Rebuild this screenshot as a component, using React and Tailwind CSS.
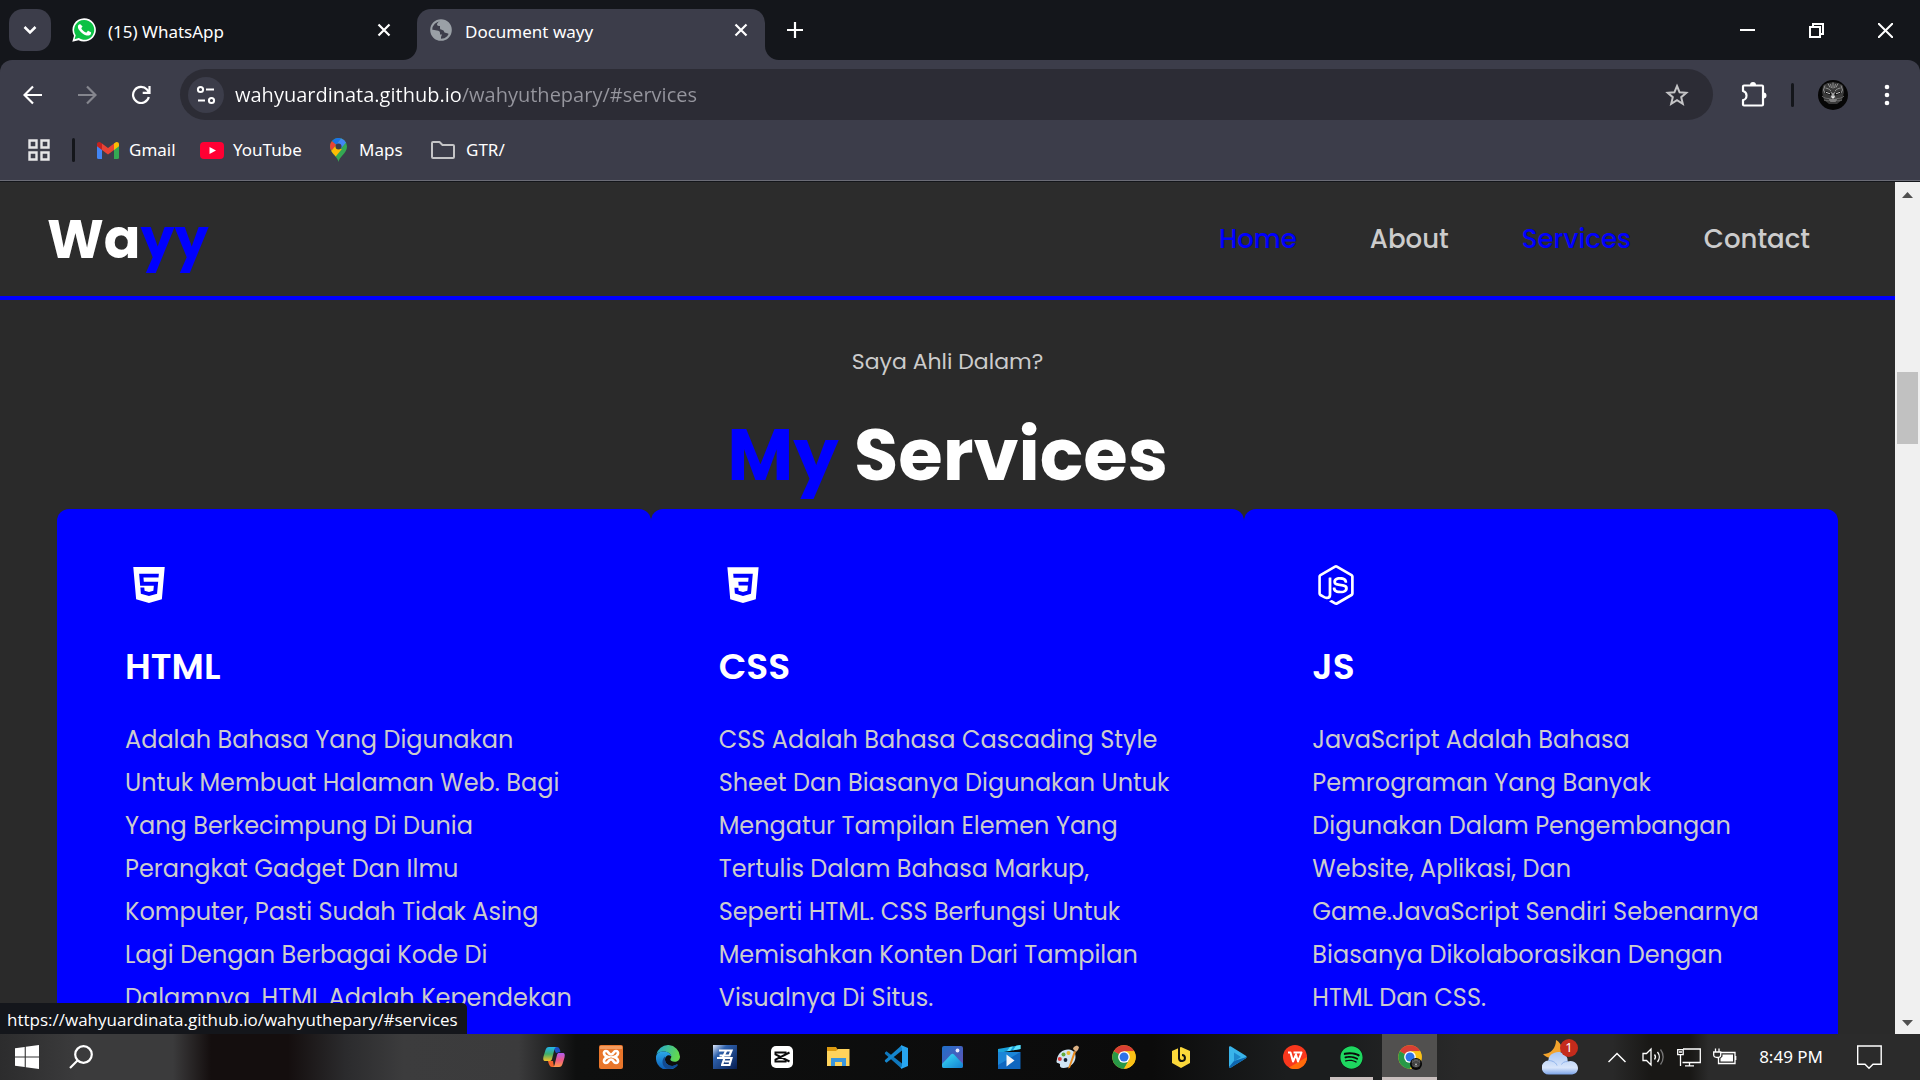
import React from "react";
import { BiLogoHtml5, BiLogoCss3, BiLogoNodejs } from "react-icons/bi";
import { FaSpotify } from "react-icons/fa";

function WhatsAppIcon() {
  return (
    <svg width="24" height="24" viewBox="0 0 24 24" aria-hidden="true">
      <path fill="#fff" d="M12.100 0.200A11.700 11.700 0 0 0 2 17.700L0.300 23.800l6.300-1.600A11.700 11.700 0 1 0 12.100 0.200z" />
      <path fill="#0bc144" d="M12.100 2A9.900 9.900 0 0 0 3.700 17.200l-1.100 4 4.200-1.100A9.900 9.900 0 1 0 12.100 2z" />
      <path fill="#fff" d="M8.800 6.800c-.3-.6-.6-.6-1-.6-.9 0-1.900 1-1.900 2.600 0 1.600 1.100 3.100 1.300 3.300.2.300 2.300 3.600 5.700 4.800 2.800 1 3.300.6 3.900.5.800-.1 1.900-.8 2.100-1.700.3-.8.300-1.400.1-1.500l-2.500-1.300c-.4-.1-.6-.1-.8.2l-1.100 1.300c-.2.200-.4.200-.7.100-.4-.2-1.500-.6-2.700-1.700-1-.9-1.700-2-1.800-2.300-.2-.4 0-.5.200-.7l.8-1c.1-.2.1-.4 0-.6z" />
    </svg>
  );
}

function GlobeIcon() {
  return (
    <svg width="24" height="24" viewBox="0 0 24 24" aria-hidden="true">
      <circle cx="12" cy="12" r="9.800" fill="#3c3d4a" stroke="#9aa0a6" strokeWidth="2" />
      <path fill="#9aa0a6" d="M2.500 11.500 8 12.500c2 .3 3 1 3 2.500v1.500h2l-1 2.500v3c-5 .5-9.500-4-9.500-10.500zM12 2c-2 2-4 2.500-4 4.500 0 1.500 1.500 1.500 3 1.500v2c0 2 2 1.500 3.500 2.500l1 2 3.500 1 2 1.500c3-6-1-14-9-15z" />
    </svg>
  );
}

function ChevronDown() {
  return (
    <svg width="20" height="20" viewBox="0 0 20 20" fill="none" stroke="#fff" strokeWidth="2.500" aria-hidden="true">
      <path d="m4.500 7 5.500 5.500L15.500 7" />
    </svg>
  );
}

function CrossIcon() {
  return (
    <svg width="14" height="14" viewBox="0 0 14 14" fill="none" stroke="#fff" strokeWidth="2.200" aria-hidden="true">
      <path d="m1.500 1.500 11 11m0-11-11 11" />
    </svg>
  );
}

function ChromeLogo({ size = 24 }) {
  return (
    <svg width={size} height={size} viewBox="0 0 48 48" aria-hidden="true">
      <circle cx="24" cy="24" r="23.500" fill="#fbc116" />
      <path fill="#d93f33" d="M24 24 3.600 12.300a23.500 23.500 0 0 1 40.800 0H24z" />
      <path fill="#279847" d="M24 24 3.600 12.300A23.500 23.500 0 0 0 24 47.500l10.200-17.600z" />
      <path fill="#fbc116" d="M24 47.500A23.500 23.500 0 0 0 44.400 12.300H24l10.200 17.600z" />
      <circle cx="24" cy="24" r="11.700" fill="#fff" />
      <circle cx="24" cy="24" r="9" fill="#2f72e8" />
    </svg>
  );
}

function CatAvatar({ size = 30 }) {
  return (
    <svg width={size} height={size} viewBox="0 0 30 30" aria-hidden="true">
      <circle cx="15" cy="15" r="15" fill="#060606" />
      <path fill="#3a3a3a" d="M5 6c1-2 3-2 5-3 3-1 7-1 10 0 2 1 4 1 5 3l1 6-2 8-5 4h-8l-5-4-2-8z" />
      <g fill="none" stroke="#8f8f8f" strokeWidth="1">
        <path d="M7 5.500 5.500 10l1.500 3M23 5.500l1.500 4.500-1.500 3M10 3.500l2 4M20 3.500l-2 4M15 2.500v6M12.500 4l1 4M17.500 4l-1 4M7.500 8c2 .5 4 1 5.500 3M22.500 8c-2 .5-4 1-5.500 3" />
        <path stroke="#0c0c0c" strokeWidth="2" d="m7.500 12 5.500 2.500M22.500 12 17 14.500" />
        <path stroke="#c8c8c8" d="m8 12.300 4 1.500M22 12.300l-4 1.500" />
        <path d="M4 16c2 2 4 2.500 7 2.500M26 16c-2 2-4 2.500-7 2.500M6 20c2 1 4 1 6 .5M24 20c-2 1-4 1-6 .5" stroke="#6a6a6a" />
      </g>
      <path fill="#a6a6a6" d="m12.500 11.500 1.500 3-1.500 3h5l-1.500-3 1.500-3-2.500 2z" />
      <path fill="#ececec" d="M13 16.500h4L15 19z" />
      <path fill="#7d7d7d" d="M10.500 18.500c2 0 3.500.5 4.500.5s2.500-.5 4.500-.5l-2 3.500h-5z" />
    </svg>
  );
}

function IconButton({ label, className, children }) {
  return (
    <button type="button" aria-label={label} className={"flex items-center justify-center " + className}>
      {children}
    </button>
  );
}

function TabStrip() {
  return (
    <div className="flex h-[60px] shrink-0 items-start bg-[#14161b] pl-[9px] text-[17px] text-white">
      <IconButton label="Search tabs" className="mt-[9px] size-[42px] rounded-[14px] bg-[#3c3d4a]">
        <ChevronDown />
      </IconButton>
      <div className="mt-[9px] flex h-[42px] w-[366px] items-center pr-[26px] pl-[21px]">
        <WhatsAppIcon />
        <span className="ml-3 flex-1 pt-[3px]">(15) WhatsApp</span>
        <IconButton label="Close WhatsApp tab" className="size-[14px]">
          <CrossIcon />
        </IconButton>
      </div>
      <div className="relative mt-[9px] flex h-[51px] w-[348px] items-start rounded-t-[14px] bg-[#3c3d4a] pr-[17px] pl-3">
        <svg className="absolute bottom-0 -left-[14px]" width="14" height="14" aria-hidden="true">
          <path d="M14 0v14H0A14 14 0 0 0 14 0z" fill="#3c3d4a" />
        </svg>
        <svg className="absolute -right-[14px] bottom-0" width="14" height="14" aria-hidden="true">
          <path d="M0 0v14h14A14 14 0 0 1 0 0z" fill="#3c3d4a" />
        </svg>
        <div className="flex h-[42px] flex-1 items-center">
          <GlobeIcon />
          <span className="ml-3 flex-1 pt-[3px]">Document wayy</span>
          <IconButton label="Close Document wayy tab" className="size-[14px]">
            <CrossIcon />
          </IconButton>
        </div>
      </div>
      <IconButton label="New tab" className="mt-[9px] ml-[9px] size-[42px]">
        <svg width="18" height="18" viewBox="0 0 18 18" stroke="#fff" strokeWidth="2.200" aria-hidden="true">
          <path d="M9 1v16M1 9h16" />
        </svg>
      </IconButton>
      <div className="ml-auto flex h-[60px]">
        <IconButton label="Minimize" className="w-[69px]">
          <svg width="15" height="15" aria-hidden="true">
            <path d="M0 6h15v2H0z" fill="#fff" />
          </svg>
        </IconButton>
        <IconButton label="Restore" className="w-[69px]">
          <svg width="15" height="15" fill="none" stroke="#fff" strokeWidth="2" aria-hidden="true">
            <path d="M1 4h10v10H1zM4 4V1h10v10h-3" />
          </svg>
        </IconButton>
        <IconButton label="Close window" className="w-[69px]">
          <svg width="15" height="15" fill="none" stroke="#fff" strokeWidth="2" aria-hidden="true">
            <path d="m0 0 15 15M15 0 0 15" />
          </svg>
        </IconButton>
      </div>
    </div>
  );
}

function AddressRow() {
  return (
    <div className="flex h-[69px] items-center pr-[19px] pl-[6px]">
      <IconButton label="Back" className="size-[54px]">
        <svg width="20" height="20" viewBox="0 0 20 20" fill="none" stroke="#fff" strokeWidth="2.200" aria-hidden="true">
          <path d="M19 10H2.500M10 1.500 1.500 10l8.500 8.500" />
        </svg>
      </IconButton>
      <IconButton label="Forward" className="size-[54px]">
        <svg width="20" height="20" viewBox="0 0 20 20" fill="none" stroke="#85868e" strokeWidth="2.200" aria-hidden="true">
          <path d="M1 10h16.500M10 1.500l8.500 8.500-8.500 8.500" />
        </svg>
      </IconButton>
      <IconButton label="Reload" className="size-[54px]">
        <svg width="20" height="20" viewBox="0 0 20 20" fill="none" stroke="#fff" strokeWidth="2.200" aria-hidden="true">
          <path d="M17.800 12A8 8 0 1 1 16 4.600L18 7M18.500 1v6.800h-6.800" />
        </svg>
      </IconButton>
      <form className="ml-3 flex h-[51px] flex-1 items-center rounded-full bg-[#2c2c35] pr-[24px] pl-2">
        <IconButton label="View site information" className="size-9 rounded-full bg-[#3c3d4a]">
          <svg width="20" height="20" viewBox="0 0 20 20" fill="none" stroke="#fff" strokeWidth="2" aria-hidden="true">
            <circle cx="4.500" cy="4.500" r="2.600" />
            <path d="M10 4.500h8M2 15.500h7" />
            <circle cx="15.500" cy="15.500" r="2.600" />
          </svg>
        </IconButton>
        <input
          type="text"
          aria-label="Address and search bar"
          defaultValue="wahyuardinata.github.io/wahyuthepary/#services"
          className="ml-[11px] h-9 min-w-0 flex-1 bg-[linear-gradient(90deg,#ffffff_227px,#96969e_227px)] bg-clip-text font-['Segoe_UI','Open_Sans',sans-serif] text-[20px] text-transparent outline-none"
        />
        <IconButton label="Bookmark this tab" className="size-6">
          <svg width="24" height="24" viewBox="0 0 24 24" fill="none" stroke="#c4c4c6" strokeWidth="2" aria-hidden="true">
            <path d="m12 3 2.600 6.300 6.700.5-5.100 4.400 1.600 6.600L12 17.200l-5.800 3.600 1.600-6.600-5.100-4.400 6.700-.5z" />
          </svg>
        </IconButton>
      </form>
      <IconButton label="Extensions" className="ml-[27px] size-[28px]">
        <svg width="28" height="28" viewBox="0 0 28 28" aria-hidden="true">
          <path d="M4 4.500h18a1 1 0 0 1 1 1v18a1 1 0 0 1-1 1H4a1 1 0 0 1-1-1V19c2 0 3.500-2 3.500-4.500S5 10.500 3 10V5.500a1 1 0 0 1 1-1z" fill="none" stroke="#fff" strokeWidth="2.200" strokeLinejoin="round" />
          <path d="M10 4a3 3 0 0 1 6 0zM23.500 11.500a3 3 0 0 1 0 6z" fill="#fff" />
        </svg>
      </IconButton>
      <span className="ml-[23px] h-6 w-[3px] rounded-full bg-[#14161b]" />
      <IconButton label="Profile" className="ml-6 size-[30px]">
        <CatAvatar />
      </IconButton>
      <IconButton label="Chrome menu" className="ml-[25px] size-[28px]">
        <svg width="6" height="22" viewBox="0 0 6 22" fill="#fff" aria-hidden="true">
          <circle cx="3" cy="3" r="2.300" />
          <circle cx="3" cy="11" r="2.300" />
          <circle cx="3" cy="19" r="2.300" />
        </svg>
      </IconButton>
    </div>
  );
}

function BookmarkRow() {
  return (
    <nav aria-label="Bookmarks" className="flex h-[51px] items-center pb-[9px] pl-7 text-[17px] text-white">
      <IconButton label="Apps" className="size-[22px]">
        <svg width="22" height="22" fill="none" stroke="#e6e6e8" strokeWidth="2.400" aria-hidden="true">
          <path d="M1.500 1.500h7v7h-7zM13.500 1.500h7v7h-7zM1.500 13.500h7v7h-7zM13.500 13.500h7v7h-7z" />
        </svg>
      </IconButton>
      <span className="ml-[22px] h-6 w-[3px] rounded-full bg-[#14161b]" />
      <a href="#gmail" className="ml-[22px] flex w-[103px] items-center gap-[10px]">
        <svg width="22" height="17" viewBox="0 0 22 17" aria-hidden="true">
          <path fill="#4285f4" d="M0 2.500 5 6v11H1.500A1.500 1.500 0 0 1 0 15.500z" />
          <path fill="#34a853" d="M22 2.500 17 6v11h3.500a1.500 1.500 0 0 0 1.500-1.500z" />
          <path fill="#ea4335" d="M5 1.500 11 6l6-4.500V8l-6 4.500L5 8z" />
          <path fill="#c5221f" d="M0 2.300C0 .2 2.300-.7 4 .7l1 .8V8L0 4.200z" />
          <path fill="#fbbc04" d="M22 2.300c0-2.100-2.300-3-4-1.600l-1 .8V8l5-3.800z" />
        </svg>
        Gmail
      </a>
      <a href="#youtube" className="flex w-[130px] items-center gap-[9px]">
        <svg width="24" height="17" viewBox="0 0 24 17" aria-hidden="true">
          <rect width="24" height="17" rx="4" fill="#ff0033" />
          <path fill="#fff" d="m9.500 5 6.500 3.500L9.500 12z" />
        </svg>
        YouTube
      </a>
      <a href="#maps" className="flex w-[101px] items-center gap-3">
        <svg width="17" height="24" viewBox="0 0 17 24" aria-hidden="true">
          <path fill="#34a853" d="M8.500 24C7.700 18.500 0 15.500 0 8.500a8.500 8.500 0 0 1 17 0c0 7-7.700 10-8.500 15.500z" />
          <path fill="#fbbc04" d="m1.200 12.800 5-6 5.500 4.500-6 7.200c-1.500-1.800-3.500-3.500-4.500-5.700z" />
          <path fill="#ea4335" d="M2 3.100 6.300 6.700l-5.100 6C-.6 9.500-.2 5.500 2 3.100z" />
          <path fill="#1a73e8" d="M2 3.100A8.500 8.500 0 0 1 11.100.4L6.300 6.700z" />
          <path fill="#4285f4" d="M11.100.4a8.500 8.500 0 0 1 4.900 4.200l-5 6-4.700-3.900z" />
          <circle cx="8.500" cy="8.500" r="3" fill="#3c3d4a" />
        </svg>
        Maps
      </a>
      <a href="#gtr" className="flex items-center gap-[11px]">
        <svg width="24" height="18" viewBox="0 0 24 18" fill="none" stroke="#c4c4c6" strokeWidth="2" strokeLinejoin="round" aria-hidden="true">
          <path d="M1 16V2a1 1 0 0 1 1-1h6.500l3 3H22a1 1 0 0 1 1 1v11a1 1 0 0 1-1 1H2a1 1 0 0 1-1-1z" />
        </svg>
        GTR/
      </a>
    </nav>
  );
}

const links = [
  { label: "Home", href: "#home", active: true },
  { label: "About", href: "#about", active: false },
  { label: "Services", href: "#services", active: true },
  { label: "Contact", href: "#contact", active: false },
];

const services = [
  {
    title: "HTML",
    Icon: BiLogoHtml5,
    lines: [
      "Adalah Bahasa Yang Digunakan",
      "Untuk Membuat Halaman Web. Bagi",
      "Yang Berkecimpung Di Dunia",
      "Perangkat Gadget Dan Ilmu",
      "Komputer, Pasti Sudah Tidak Asing",
      "Lagi Dengan Berbagai Kode Di",
      "Dalamnya. HTML Adalah Kependekan",
    ],
  },
  {
    title: "CSS",
    Icon: BiLogoCss3,
    lines: [
      "CSS Adalah Bahasa Cascading Style",
      "Sheet Dan Biasanya Digunakan Untuk",
      "Mengatur Tampilan Elemen Yang",
      "Tertulis Dalam Bahasa Markup,",
      "Seperti HTML. CSS Berfungsi Untuk",
      "Memisahkan Konten Dari Tampilan",
      "Visualnya Di Situs.",
    ],
  },
  {
    title: "JS",
    Icon: BiLogoNodejs,
    lines: [
      "JavaScript Adalah Bahasa",
      "Pemrograman Yang Banyak",
      "Digunakan Dalam Pengembangan",
      "Website, Aplikasi, Dan",
      "Game.JavaScript Sendiri Sebenarnya",
      "Biasanya Dikolaborasikan Dengan",
      "HTML Dan CSS.",
    ],
  },
];

function WebPage() {
  return (
    <div className="min-w-0 flex-1 overflow-hidden bg-[#2a2a2a] font-['Poppins','Inter',sans-serif] text-white">
      <header className="flex h-[118px] items-center justify-between border-b-4 border-[#0000ff] bg-[#2c2c2c] pr-[85px] pl-[47px]">
        <a href="#home" className="text-[54px] leading-none font-bold">
          Wa<span className="text-[#0000ff]">yy</span>
        </a>
        <nav aria-label="Main" className="flex gap-[73px] text-[26px] font-medium">
          {links.map((link) => (
            <a key={link.label} href={link.href} className={link.active ? "text-[#0000ff]" : "text-[#cccccc]"}>
              {link.label}
            </a>
          ))}
        </nav>
      </header>
      <section id="services" className="px-[57px] pt-11">
        <p className="text-center text-[22px] leading-9 text-[#cccccc]">Saya Ahli Dalam?</p>
        <h2 className="mt-8 mb-[11px] text-center text-[72px] leading-[86px] font-bold">
          <span className="text-[#0000ff]">My</span> Services
        </h2>
        <div className="grid grid-cols-3">
          {services.map(({ title, Icon, lines }) => (
            <article key={title} className="rounded-xl bg-[#0000ff] px-[68px] pt-[52px] pb-20">
              <Icon size={48} aria-hidden="true" />
              <h3 className="mt-[31px] text-[36px] leading-[54px] font-semibold">{title}</h3>
              <p className="mt-6 text-[24px] leading-[43px] text-[#cccccc]">
                {lines.map((line) => (
                  <span key={line} className="block whitespace-nowrap">
                    {line}
                  </span>
                ))}
              </p>
            </article>
          ))}
        </div>
      </section>
    </div>
  );
}

function ScrollBar() {
  return (
    <div className="flex w-[25px] shrink-0 flex-col items-center bg-[#f0f0f0] pt-[10px] pb-2">
      <svg width="11" height="6" aria-hidden="true">
        <path d="M0 6 5.500 0 11 6z" fill="#505050" />
      </svg>
      <div className="w-full flex-[174]" />
      <div className="h-[72px] w-[21px] bg-[#c1c1c1]" />
      <div className="w-full flex-[576]" />
      <svg width="11" height="6" aria-hidden="true">
        <path d="M0 0h11L5.500 6z" fill="#505050" />
      </svg>
    </div>
  );
}

function CopilotIcon() {
  return (
    <svg width="24" height="24" viewBox="0 0 24 24" aria-hidden="true">
      <defs>
        <linearGradient id="cpA" x1="0" y1="0" x2="0" y2="1">
          <stop offset="0" stopColor="#23b5ee" />
          <stop offset=".5" stopColor="#3fae6a" />
          <stop offset="1" stopColor="#f6c12a" />
        </linearGradient>
        <linearGradient id="cpB" x1="0" y1="0" x2="0" y2="1">
          <stop offset="0" stopColor="#b25cf0" />
          <stop offset=".5" stopColor="#ec5a86" />
          <stop offset="1" stopColor="#ff9a4a" />
        </linearGradient>
      </defs>
      <path fill="#1c50c4" d="M11 2h4c2 0 3 2 3.500 5L14 8z" />
      <path fill="#f2632c" d="M6 16h5l1 6h-2c-2 0-3-2-4-6z" />
      <path fill="url(#cpA)" d="M7 2h8c-2 0-2.500 1.500-3 4l-2 8c-.5 1.500-1 2-3 2H3.500C1 16 1 14 1.500 11.500L3.500 5C4.200 3 5 2 7 2z" />
      <path fill="url(#cpB)" d="M17 8h3.500C23 8 23 10 22.500 12.500L20.500 19c-.7 2-1.500 3-3.500 3h-7c2 0 2.500-1.500 3-4l2-8c.4-1.500 1-2 2-2z" />
    </svg>
  );
}

function XamppIcon() {
  return (
    <svg width="24" height="24" viewBox="0 0 24 24" aria-hidden="true">
      <rect width="24" height="24" rx="2" fill="#e9762b" />
      <path d="M1 1h22v3H1z" fill="#f39b5f" />
      <path
        d="M9 12c-5-1.500-5-6-2-6 3 0 2 3.500 5 3.500S14 6 17 6c3 0 3 4.500-2 6 5 1.500 5 6 2 6-3 0-2-3.500-5-3.500S10 18 7 18c-3 0-3-4.500 2-6z"
        fill="none"
        stroke="#fff"
        strokeWidth="2.600"
      />
    </svg>
  );
}

function EdgeIcon() {
  return (
    <svg width="24" height="24" viewBox="0 0 24 24" aria-hidden="true">
      <defs>
        <linearGradient id="edA" x1="0" y1="0" x2="1" y2=".3">
          <stop offset="0" stopColor="#1fa5dc" />
          <stop offset="1" stopColor="#62d84e" />
        </linearGradient>
        <linearGradient id="edB" x1="0" y1="0" x2="0" y2="1">
          <stop offset="0" stopColor="#2ba8e8" />
          <stop offset="1" stopColor="#0b59b4" />
        </linearGradient>
      </defs>
      <path fill="url(#edA)" d="M.2 10A12 12 0 0 1 24 11.500c0 3.500-2.500 5.300-5.300 5.300-3 0-4.700-1.300-4.300-2.600.3-.9.900-1.200.9-2.600C15.300 8.500 11 6 6.500 6.500 3 7 .5 9 .2 10z" />
      <path fill="url(#edB)" d="M0 12c0-3 3-5.500 7-5.500 4.500 0 8 2 8.200 4.700C13 9 9 10.500 9 14.500c0 4.500 5 7.500 9.500 6 1.500-.5 2.500-1.200 3-.8.300.300-.200.900-.7 1.500A12 12 0 0 1 0 12z" />
      <path fill="#124a90" d="M9 14.500c0 4.500 5 7.500 9.500 6 1.500-.5 2.500-1.200 3-.8.300.3-.1.800-.7 1.300A12 12 0 0 1 13 24c-6 0-9-8-4-12.500z" />
    </svg>
  );
}

function BlueToolIcon() {
  return (
    <svg width="24" height="24" viewBox="0 0 24 24" aria-hidden="true">
      <defs>
        <linearGradient id="btA" x1="0" y1="0" x2="1" y2="1">
          <stop offset="0" stopColor="#dfe9fa" />
          <stop offset=".3" stopColor="#2f62ad" />
          <stop offset="1" stopColor="#061d51" />
        </linearGradient>
      </defs>
      <rect width="24" height="24" fill="url(#btA)" />
      <path fill="none" stroke="#fff" strokeWidth="2.200" d="M6 5.500h12.500l-2 5H6.500M13 6 9.500 13H4M9 20l2.500-7h7l-1 3.500h-6M17.500 16.500l-1 3.500H8" />
    </svg>
  );
}

function CapCutIcon() {
  return (
    <svg width="22" height="22" viewBox="0 0 22 22" aria-hidden="true">
      <rect width="22" height="22" rx="5" fill="#fff" />
      <path fill="none" stroke="#0a0a0a" strokeWidth="2" d="M18.500 6.500 4.500 13.500v2h10v-2M18.500 15.500 4.500 8.500v-2h10v2" />
    </svg>
  );
}

function ExplorerIcon() {
  return (
    <svg width="23" height="20" viewBox="0 0 23 20" aria-hidden="true">
      <path fill="#dd9a10" d="M0 0h9l2 3h11v4H0z" />
      <path fill="#ffd35c" d="M0 4h9l2-2h11.500v17H0z" />
      <path fill="#3a96dd" d="M4 11h15v8h-4v-4H8v4H4z" />
    </svg>
  );
}

function CodeIcon() {
  return (
    <svg width="24" height="24" viewBox="0 0 24 24" aria-hidden="true">
      <path fill="#0f78bd" d="m1 7.500 1.500-1.200L18 18.500V24L.8 8.700z" />
      <path fill="#1586cd" d="M1 16.500l1.500 1.200L18 5.500V0L.8 15.300z" />
      <path fill="#27a5f0" d="M17.500.2 24 3v18l-6.500 2.800L16.500 22c.9 0 1.500-.5 1.500-1.500v-17c0-1-.6-1.500-1.500-1.500z" />
    </svg>
  );
}

function PhotosIcon() {
  return (
    <svg width="21" height="22" viewBox="0 0 21 22" aria-hidden="true">
      <defs>
        <linearGradient id="phA" x1="0" y1="0" x2="1" y2="1">
          <stop offset="0" stopColor="#1f6fc8" />
          <stop offset="1" stopColor="#6452b5" />
        </linearGradient>
        <linearGradient id="phB" x1="0" y1="0" x2="1" y2="1">
          <stop offset="0" stopColor="#3be0fa" />
          <stop offset="1" stopColor="#137fd0" />
        </linearGradient>
      </defs>
      <rect width="21" height="22" rx="2" fill="url(#phA)" />
      <path fill="url(#phB)" d="m0 18 9-9.500c1-1 2-1 3 0l9 9.500v2a2 2 0 0 1-2 2H2a2 2 0 0 1-2-2z" />
      <circle cx="15.500" cy="4.500" r="1.900" fill="#e8ecff" />
    </svg>
  );
}

function MoviesIcon() {
  return (
    <svg width="23" height="24" viewBox="0 0 23 24" aria-hidden="true">
      <path fill="#1aa2dc" d="M0 4 22.500 0v4L0 8z" />
      <path fill="#5fe3fa" d="m12 2 3-.6L12 6H9zM18 .8l4.500-.8v4L15 5.300z" />
      <path fill="#0f66bf" d="M0 7h22.500v17H0z" />
      <path fill="#1b86d8" d="M0 7h22.500L0 20z" />
      <path fill="#f2f4f8" d="m8.500 9.500 8 6-8 6z" />
    </svg>
  );
}

function PaintIcon() {
  return (
    <svg width="24" height="24" viewBox="0 0 24 24" aria-hidden="true">
      <path fill="#cfe4f3" d="M2 14C3 8 8 4 14 4.500c4 .5 7 3 6.500 8-.5 6-6 10.500-12 10.500-3 0-4-1.500-3.500-3S4 18.500 2.500 18 1.500 16 2 14z" />
      <circle cx="4.800" cy="14" r="2" fill="#dc3b3b" />
      <circle cx="8.500" cy="9.500" r="2" fill="#62aa3a" />
      <circle cx="13.500" cy="8" r="2" fill="#e8b72c" />
      <circle cx="10.500" cy="15" r="1.900" fill="#122235" />
      <path fill="#e88a1e" d="m19 6 2 .8-6 16-2 .7z" />
      <path fill="#dcb184" d="M18 4c0-2 2-3 4-3.500L24 2c-.5 2-1 3.500-3 5z" />
    </svg>
  );
}

function HexBIcon() {
  return (
    <svg width="18" height="21" viewBox="0 0 18 21" aria-hidden="true">
      <path fill="#fbd83a" d="m9 0 9 4v12l-9 5-9-5V4z" />
      <path fill="none" stroke="#111" strokeWidth="2" d="M7 0v11.500a3 3 0 1 0 3-3.500" />
    </svg>
  );
}

function PlayIcon() {
  return (
    <svg width="18" height="22" viewBox="0 0 18 22" aria-hidden="true">
      <path fill="#39b4ea" d="M0 1C0 0 1 0 2 .4l14.500 9c1.500 1 1.500 2 0 3L2 21.500c-1 .6-2 .3-2-1z" />
      <path fill="#0d66b0" d="M0 21 5 15l12.500-4c0 .6-.5 1-1 1.400L2 21.500c-1 .5-2 .3-2-.5z" />
      <path fill="#1c88cc" d="M5 6.500 12 11l-7 4.500z" />
    </svg>
  );
}

function WpsIcon() {
  return (
    <svg width="24" height="24" viewBox="0 0 24 24" aria-hidden="true">
      <circle cx="12" cy="12" r="12" fill="#f8371d" />
      <path fill="#ff6a0a" d="M24 12A12 12 0 0 1 6 22.500z" />
      <path fill="none" stroke="#fff" strokeWidth="2" strokeLinejoin="round" d="M5 7.500h2.500l2.500 9 3-7 2 7 3.500-9h-8" />
    </svg>
  );
}

function SpotifyIcon() {
  return (
    <span className="flex rounded-full bg-[#0b0b0b]">
      <FaSpotify size={23} color="#1ed760" aria-hidden="true" />
    </span>
  );
}

const apps = [
  { name: "Copilot", Icon: CopilotIcon },
  { name: "XAMPP", Icon: XamppIcon },
  { name: "Edge", Icon: EdgeIcon },
  { name: "Partition tool", Icon: BlueToolIcon },
  { name: "CapCut", Icon: CapCutIcon },
  { name: "File Explorer", Icon: ExplorerIcon },
  { name: "Visual Studio Code", Icon: CodeIcon },
  { name: "Photos", Icon: PhotosIcon },
  { name: "Movies", Icon: MoviesIcon },
  { name: "Paint", Icon: PaintIcon },
  { name: "Chrome", Icon: ChromeLogo },
  { name: "Editor", Icon: HexBIcon },
  { name: "Player", Icon: PlayIcon },
  { name: "WPS Office", Icon: WpsIcon },
];

function WeatherIcon() {
  return (
    <svg width="36" height="35" viewBox="0 0 36 35" aria-hidden="true">
      <defs>
        <linearGradient id="wtA" x1="0" y1="0" x2="0" y2="1">
          <stop offset="0" stopColor="#a9c7f4" />
          <stop offset=".7" stopColor="#d9e6fb" />
          <stop offset="1" stopColor="#7ba3e8" />
        </linearGradient>
      </defs>
      <path fill="#f2a32c" d="M14 0c6 3 7 10 3 15-4 4-12 4-16-1 8 0 13-6 13-14z" />
      <path fill="url(#wtA)" d="M7 34.500a7 7 0 0 1-.5-14C6 14 16 9 22 14c3 2 4 5 3.500 7.500l3-.5c10 1 10 13.500 0 13.500z" />
      <path fill="none" stroke="#8fb2ec" strokeWidth="1" d="M6.500 20.500c5 0 8 3 8.500 5M25.500 21.500c-3 0-5 1-6 3" />
    </svg>
  );
}

function TaskBar() {
  return (
    <footer className="grid h-[46px] shrink-0 grid-cols-[525fr_auto_483fr] bg-[linear-gradient(90deg,#2c2c2d_0%,#3b3b3c_4%,#3b3b3c_9%,#140e0e_11%,#140e0e_15%,#2b2b2d_18%,#3c3c3d_21%,#3b3b3c_27%,#0e0f0f_30%,#0b0b0b_60%,#1b1d1e_67%,#1b1d1e_70%,#292929_76%,#292929_84%,#181715_86%,#181715_88%,#2b2b2b_89%,#2b2b2b_100%)] text-white">
      <div className="flex items-center pl-[15px]">
        <IconButton label="Start" className="size-6">
          <svg width="24" height="24" viewBox="0 0 24 24" fill="#fff" aria-hidden="true">
            <path d="M0 3.300 9.700 2v9.500H0zM10.800 1.800 24 0v11.500H10.800zM0 12.500h9.700V22L0 20.700zM10.800 12.500H24V24l-13.200-1.800z" />
          </svg>
        </IconButton>
        <IconButton label="Search" className="ml-[30px] size-6">
          <svg width="24" height="24" viewBox="0 0 24 24" fill="none" stroke="#fff" strokeWidth="2.200" aria-hidden="true">
            <circle cx="14.500" cy="9.500" r="8.300" />
            <path d="M8.500 15.500 1 23" />
          </svg>
        </IconButton>
      </div>
      <div className="flex">
        {apps.map(({ name, Icon }) => (
          <IconButton key={name} label={name} className="w-[57px]">
            <Icon />
          </IconButton>
        ))}
        <IconButton label="Spotify" className="relative w-[57px]">
          <SpotifyIcon />
          <span className="absolute bottom-0 h-[3px] w-[43px] bg-[#c9bfbe]" />
        </IconButton>
        <IconButton label="Chrome, wayy profile" className="relative ml-[2px] w-[55px] bg-[#51504f]">
          <ChromeLogo />
          <span className="absolute right-[15px] bottom-[10px]">
            <CatAvatar size={12} />
          </span>
          <span className="absolute bottom-0 h-[3px] w-full bg-[#c9bfbe]" />
        </IconButton>
      </div>
      <div className="flex items-center justify-end pr-[38px]">
        <IconButton label="Weather" className="relative mr-auto ml-[105px] w-[36px]">
          <WeatherIcon />
          <span className="absolute -top-[1px] right-0 flex size-[18px] items-center justify-center rounded-full bg-[#c42b1c] text-[13px] leading-none">
            1
          </span>
        </IconButton>
        <IconButton label="Show hidden icons" className="mr-[16px] w-[18px]">
          <svg width="18" height="11" fill="none" stroke="#fff" strokeWidth="1.500" aria-hidden="true">
            <path d="m.5 10 8.500-8.500L17.500 10" />
          </svg>
        </IconButton>
        <IconButton label="Volume" className="mr-[13px] w-[22px]">
          <svg width="22" height="20" fill="none" stroke="#fff" strokeWidth="1.300" aria-hidden="true">
            <path d="M1 6.500h3.500L9 2v16l-4.500-4.500H1zM12.500 7.500a4 4 0 0 1 0 5M15.500 5a8 8 0 0 1 0 10" />
            <path stroke="#777" d="M18.500 2.500a12 12 0 0 1 0 15" />
          </svg>
        </IconButton>
        <IconButton label="Network" className="mr-[12px] w-[24px]">
          <svg width="24" height="19" fill="none" stroke="#fff" strokeWidth="1.300" aria-hidden="true">
            <path d="M6 1h17.300v13.500H5.500M12.500 14.500v3M8 17.800h9M.7 1.700h5.500v5H.7zM3.500 6.700V18M2 4h3" />
          </svg>
        </IconButton>
        <IconButton label="Battery" className="mr-[22px] w-[24px]">
          <svg width="24" height="18" fill="none" stroke="#fff" strokeWidth="1.300" aria-hidden="true">
            <path d="M8 4.500h14v11H5.500V10M22.700 8v4M2.500.500v3.500M6 .500v3.500M.700 4h7v3c0 1.500-1 2.500-3.500 2.500S.7 8.500.7 7z" />
            <path fill="#fff" stroke="none" d="M9.500 6.500H20v7H7.500v-3l2-2z" />
          </svg>
        </IconButton>
        <time className="text-[17px]">8:49 PM</time>
        <IconButton label="Notifications" className="ml-[34px] w-[25px]">
          <svg width="25" height="25" fill="none" stroke="#fff" strokeWidth="1.400" aria-hidden="true">
            <path d="M.7 1h23.500v18.300H16l-4 4-4-4H.7z" />
          </svg>
        </IconButton>
      </div>
    </footer>
  );
}

export default function App() {
  return (
    <div className="flex h-screen flex-col overflow-hidden bg-[#14161b] font-['Segoe_UI','Noto_Sans',sans-serif]">
      <TabStrip />
      <div className="shrink-0 rounded-t-[12px] border-b border-[#6b6c76] bg-[#3c3d4a]">
        <AddressRow />
        <BookmarkRow />
      </div>
      <main className="relative mt-px flex min-h-0 flex-1">
        <WebPage />
        <ScrollBar />
        <div className="absolute bottom-0 left-0 flex h-[31px] w-[467px] items-center rounded-tr-[5px] bg-[#14161b] pt-[2px] pl-[7px] font-['Segoe_UI','Open_Sans',sans-serif] text-[17px] whitespace-nowrap text-white">
          https://wahyuardinata.github.io/wahyuthepary/#services
        </div>
      </main>
      <TaskBar />
    </div>
  );
}
